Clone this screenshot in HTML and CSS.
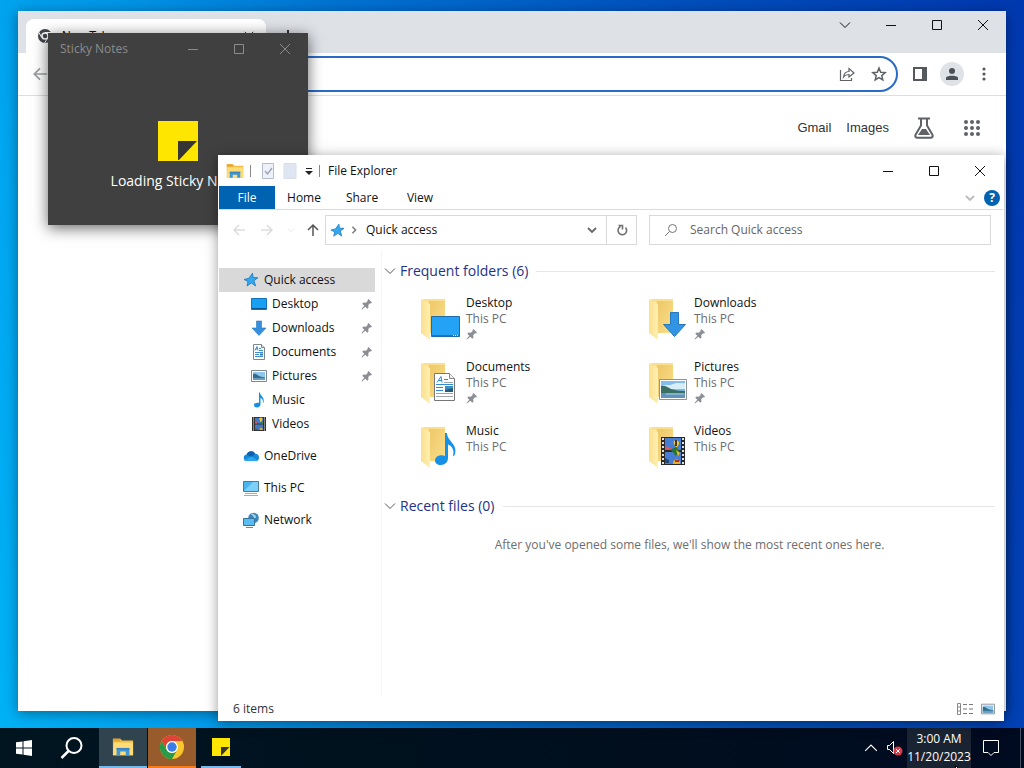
FILE: index.html
```html
<!DOCTYPE html>
<html lang="en">
<head>
    <meta charset="UTF-8">
    <meta name="viewport" content="width=device-width, initial-scale=1.0">
    <title>Desktop</title>
    <link rel="stylesheet" href="styles.css">
</head>
<body>
    <!-- Shared icons -->
    <svg class="sprite" aria-hidden="true">
        <linearGradient id="flap" x1="0" x2="1" y1="0" y2="0"><stop offset="0" stop-color="#fbe08c"/><stop offset="1" stop-color="#ffefb4"/></linearGradient>
        <linearGradient id="sheet" x1="0" x2="1" y1="0" y2="1"><stop offset="0" stop-color="#eec768"/><stop offset="1" stop-color="#fbdf8a"/></linearGradient>
        <symbol id="min" viewBox="0 0 12 12"><path d="M1 6.5h10" fill="none" stroke="currentColor"/></symbol>
        <symbol id="max" viewBox="0 0 12 12"><path d="M1.5 1.5h9v9h-9z" fill="none" stroke="currentColor"/></symbol>
        <symbol id="close" viewBox="0 0 12 12"><path d="M1 1l10 10M11 1L1 11" fill="none" stroke="currentColor"/></symbol>
        <symbol id="chevron" viewBox="0 0 12 12"><path d="M1 3.5l5 5 5-5" fill="none" stroke="currentColor"/></symbol>
        <symbol id="chevron-bold" viewBox="0 0 10 10"><path d="M1 3l4 4 4-4" fill="none" stroke="currentColor" stroke-width="1.8"/></symbol>
        <symbol id="arrow" viewBox="0 0 14 14"><path d="M13 7H2M7 2L2 7l5 5" fill="none" stroke="currentColor" stroke-width="1.5"/></symbol>
        <symbol id="pin" viewBox="0 0 12 12"><path d="M7.500 1L11 4.500l-1 1-1-.2-1.800 1.900.3 2.300-1.200 1.200-2-2L1 11.500l-.5-.5 2.800-3.300-2-2 1.200-1.200 2.300.3L6.700 3l-.2-1z" fill="#8b8f94"/></symbol>
        <symbol id="star" viewBox="0 0 16 16"><path d="M9.500 1.200l.6 4.300 4.900.2-4 2.800 1.600 5.500-4.300-3L4 14l1-4.500L1 7.500l4.800-1.200z" fill="#33a8ee" stroke="#1679c4" stroke-width=".8"/></symbol>
        <symbol id="desktop" viewBox="0 0 16 16"><path d="M.5 2.500h15v11H.5z" fill="#18a0f4" stroke="#1173bb"/><path d="M1 12.500h14" stroke="#0b568f"/></symbol>
        <symbol id="down" viewBox="0 0 16 16"><path d="M5.500 1h5v7H15l-7 7.500L1 8h4.500z" fill="#368fdd" stroke="#2578c0" stroke-width=".6"/></symbol>
        <symbol id="document" viewBox="0 0 16 16">
            <path d="M2.500.5h8l3 3v12h-11z" fill="#fff" stroke="#7d8790"/>
            <path d="M10.500.5v3h3" fill="#e6eaee" stroke="#7d8790"/>
            <path d="M4 6.500l2-4 1 4M4.500 5h2M8 4.500h2M8 6.500h4M4 8.500h8M4 10.500h4M4 12.500h8" fill="none" stroke="#3f8fc4"/>
            <path d="M9 9.500h3v2H9z" fill="#2f77ad"/>
        </symbol>
        <symbol id="picture" viewBox="0 0 16 16">
            <path d="M.5 2.500h15v11H.5z" fill="#fff" stroke="#7d8790"/>
            <path d="M2 4h12v8H2z" fill="#8fc6ef"/><path d="M2 6c3-1 4 1 6 2s4 1 6 1.500V12H2z" fill="#326f87"/><path d="M2 10h12v2H2z" fill="#699cc4"/>
        </symbol>
        <symbol id="music" viewBox="0 0 16 16"><path d="M8 .5h1c0 3.500 5 4.500 3.500 10-.3.700-.6.800-.6 0 .3-3-1.200-4-2.400-4.500V12c0 2-1.500 3.500-3.500 3.500S3 14.300 3 13c0-1.600 2-2.800 5-2.200z" fill="#1491e6"/></symbol>
        <symbol id="video" viewBox="0 0 16 16">
            <path d="M1 1h14v14H1z" fill="#34302f"/><path d="M4 2h8v5.500H4zM4 8.500h8V14H4z" fill="#4179c9"/>
            <path d="M2.500 1.500V15M13.500 1.500V15" stroke="#ddd" stroke-dasharray="1 1"/>
            <path d="M8.500 3.500a1.500 1.500 0 1 1 2.800 0L10.300 6h-1z" fill="#f0c52e"/><path d="M4 5l3 1-1 1.500H4z" fill="#d8504b"/><path d="M9 7l3-2v2.500H9z" fill="#3b8236"/><path d="M8.500 14c.3-3 3-3 3.500 0z" fill="#e5ac21"/><path d="M4 12l3 1v1H4z" fill="#34793e"/>
        </symbol>
        <symbol id="cloud" viewBox="0 0 16 16"><path d="M3.500 6.500a4.800 4.800 0 0 1 8.700-.7A4 4 0 0 1 16 9.800 3.400 3.400 0 0 1 12.500 13H3.500a3.300 3.300 0 0 1 0-6.500z" fill="#1687d9"/><path d="M3.500 6.500a4.800 4.800 0 0 1 8.700-.7L8.500 9z" fill="#0d60ad"/><path d="M1 12l7.500-3.500 6 3.800a4 4 0 0 1-2 .7h-9c-1 0-2-.4-2.500-1z" fill="#28a8ea"/></symbol>
        <symbol id="pc" viewBox="0 0 16 16"><path d="M.5 1.500h15v10H.5z" fill="#49b5ef" stroke="#4a7b99"/><path d="M1 11l9-9h5v9z" fill="#7dd0f8"/><path d="M2 13.500h12M1 15.500h14" stroke="#a0adb5"/></symbol>
        <symbol id="network" viewBox="0 0 16 16"><circle cx="10.500" cy="6" r="5.300" fill="#3b87bd"/><path d="M9 1.500c3 1 4 2 4 4l-2 1c0-2-1-3-3-4z" fill="#a5d2e8"/><path d="M.5 6.500h11v7H.5z" fill="#5abcf0" stroke="#34749d"/><path d="M3 15.500h7" stroke="#6c8797"/></symbol>
        <symbol id="folder" viewBox="0 0 40 44">
            <path d="M3 2h22v34H6z" fill="#fae08d"/><path d="M9 4h16v32H9z" fill="url(#sheet)"/><path d="M1 2l9 5v36l-9-7z" fill="url(#flap)"/>
        </symbol>
        <symbol id="explorer" viewBox="0 0 24 20">
            <path d="M1 1h8l2 2h12v16H1z" fill="#f2be42"/><path d="M2 5h21v14H1z" fill="#ffdc77"/><path d="M1 1h8v3H1z" fill="#e6a42b"/><path d="M5 19v-8h14v8h-4v-4H9v4z" fill="#4296d5"/><path d="M5 11h14v2H5z" fill="#3784c2"/>
        </symbol>
        <symbol id="note" viewBox="0 0 40 40"><path d="M0 0h40v40H0z" fill="#ffe600"/><path class="fold" d="M20 20h19L21 39h-1z"/></symbol>
    </svg>

    <main class="desktop">
        <!-- Browser -->
        <section class="window browser">
            <header class="tabstrip">
                <div class="tab">
                    <svg width="14" height="14" viewBox="0 0 14 14"><circle cx="7" cy="7" r="7" fill="#43474b"/><circle cx="7" cy="7" r="3" fill="#43474b" stroke="#fff" stroke-width="1.500"/><path d="M7 3.500h6.500M3.700 8.500L1 3.500M9.800 9L6.500 14" stroke="#fff"/></svg>
                    <span>New Tab</span>
                    <svg class="tab-close" width="10" height="10"><use href="#close"/></svg>
                </div>
                <button class="new-tab" aria-label="New tab"><svg width="12" height="12" viewBox="0 0 12 12"><path d="M6 0v12M0 6h12" stroke="#333" stroke-width="2"/></svg></button>
                <div class="controls">
                    <button aria-label="Search tabs"><svg><use href="#chevron"/></svg></button>
                    <button aria-label="Minimize"><svg><use href="#min"/></svg></button>
                    <button aria-label="Maximize"><svg><use href="#max"/></svg></button>
                    <button aria-label="Close"><svg><use href="#close"/></svg></button>
                </div>
            </header>
            <div class="toolbar">
                <button class="back" aria-label="Back"><svg width="16" height="16"><use href="#arrow"/></svg></button>
                <div class="omnibox">
                    <input type="text" aria-label="Address">
                    <button aria-label="Share"><svg width="16" height="16" viewBox="0 0 16 16"><path d="M1.500 4v10.500h11V12M4.500 11c.5-4 2.500-5.500 5.500-5.500V2.500L15 7l-5 4V8.500C7.500 8.500 6 9 4.500 11z" fill="none" stroke="#5f6368" stroke-width="1.200"/></svg></button>
                    <button aria-label="Bookmark"><svg width="16" height="16" viewBox="0 0 16 16"><path d="M8 2l1.700 4.200 4.500.4-3.400 3 1 4.400L8 11.600l-3.800 2.400 1-4.400-3.400-3 4.500-.4z" fill="none" stroke="#5f6368" stroke-width="1.500"/></svg></button>
                </div>
                <button class="tool" aria-label="Side panel"><svg width="14" height="14" viewBox="0 0 14 14"><path d="M1 1h12v12H1z" fill="none" stroke="#55595d" stroke-width="2"/><path d="M9 1h4v12H9z" fill="#55595d"/></svg></button>
                <button class="tool avatar" aria-label="Profile"><svg width="12" height="12" viewBox="0 0 12 12"><circle cx="6" cy="3" r="3" fill="#4b5157"/><path d="M0 12V9.500C1.500 7 10.500 7 12 9.500V12z" fill="#4b5157"/></svg></button>
                <button class="tool" aria-label="Menu"><svg width="4" height="14" viewBox="0 0 4 14" fill="#55595d"><circle cx="2" cy="2" r="1.600"/><circle cx="2" cy="7" r="1.600"/><circle cx="2" cy="12" r="1.600"/></svg></button>
            </div>
            <nav class="google-links">
                <a href="#">Gmail</a>
                <a href="#">Images</a>
                <a class="labs" href="#" aria-label="Labs"><svg width="20" height="22" viewBox="0 0 20 22"><path d="M4 1.500h12M7 1.500v7L1.700 17.500c-1 2 0 3.200 1.800 3.200h13c1.800 0 2.800-1.200 1.800-3.200L13 8.500v-7" fill="none" stroke="#5f6368" stroke-width="2"/><path d="M4 18l4-6h4l4 6z" fill="#5f6368"/></svg></a>
                <a class="apps" href="#" aria-label="Apps"><svg width="18" height="18" viewBox="0 0 18 18" fill="#5f6368"><circle cx="3" cy="3" r="2"/><circle cx="9" cy="3" r="2"/><circle cx="15" cy="3" r="2"/><circle cx="3" cy="9" r="2"/><circle cx="9" cy="9" r="2"/><circle cx="15" cy="9" r="2"/><circle cx="3" cy="15" r="2"/><circle cx="9" cy="15" r="2"/><circle cx="15" cy="15" r="2"/></svg></a>
            </nav>
        </section>

        <!-- Sticky Notes splash -->
        <section class="window sticky">
            <header class="titlebar">
                <span>Sticky Notes</span>
                <div class="controls">
                    <button aria-label="Minimize"><svg><use href="#min"/></svg></button>
                    <button aria-label="Maximize"><svg><use href="#max"/></svg></button>
                    <button aria-label="Close"><svg><use href="#close"/></svg></button>
                </div>
            </header>
            <div class="splash">
                <svg width="40" height="40"><use href="#note"/></svg>
                <p>Loading Sticky Notes</p>
            </div>
        </section>

        <!-- File Explorer -->
        <section class="window explorer">
            <header class="titlebar">
                <div class="quick-tools">
                    <svg width="18" height="16"><use href="#explorer"/></svg>
                    <i class="sep"></i>
                    <svg class="props" width="14" height="16" viewBox="0 0 14 16"><path d="M1.500.5h11v15h-11z" fill="#eef2f8" stroke="#b4bdcb"/><path d="M4 8l2.500 3L11 5" fill="none" stroke="#93a2bd" stroke-width="1.300"/></svg>
                    <svg class="blank" width="14" height="16" viewBox="0 0 14 16"><path d="M1 .5h12v15H1z" fill="#dfe5f2" stroke="#d9dfea"/></svg>
                    <svg width="8" height="8" viewBox="0 0 8 8"><path d="M1 1.500h6" stroke="#222"/><path d="M0 4h8L4 8z" fill="#222"/></svg>
                    <i class="sep"></i>
                </div>
                <h1>File Explorer</h1>
                <div class="controls">
                    <button aria-label="Minimize"><svg><use href="#min"/></svg></button>
                    <button aria-label="Maximize"><svg><use href="#max"/></svg></button>
                    <button aria-label="Close"><svg><use href="#close"/></svg></button>
                </div>
            </header>
            <nav class="ribbon">
                <button class="file">File</button>
                <button>Home</button>
                <button>Share</button>
                <button>View</button>
                <svg class="expand" width="10" height="10"><use href="#chevron-bold"/></svg>
                <button class="help" aria-label="Help">?</button>
            </nav>
            <div class="address-row">
                <button class="nav-btn" aria-label="Back"><svg><use href="#arrow"/></svg></button>
                <button class="nav-btn forward" aria-label="Forward"><svg><use href="#arrow"/></svg></button>
                <button class="nav-btn recent" aria-label="Recent locations"><svg><use href="#chevron"/></svg></button>
                <button class="nav-btn up" aria-label="Up"><svg><use href="#arrow"/></svg></button>
                <div class="address">
                    <svg width="15" height="15"><use href="#star"/></svg>
                    <svg class="crumb" width="8" height="8"><use href="#chevron-bold"/></svg>
                    <span>Quick access</span>
                    <button class="history" aria-label="Previous locations"><svg width="10" height="10"><use href="#chevron-bold"/></svg></button>
                    <button class="refresh" aria-label="Refresh"><svg width="12" height="12" viewBox="0 0 12 12"><path d="M9.500 3.500a4.300 4.300 0 1 1-5-1M2.500 1.500h4v4" fill="none" stroke="#707070" stroke-width="1.600"/></svg></button>
                </div>
                <label class="search">
                    <svg width="14" height="14" viewBox="0 0 14 14"><circle cx="8.500" cy="5.500" r="4" fill="none" stroke="#777"/><path d="M5.500 8.500L1 13" stroke="#777"/></svg>
                    <input type="text" placeholder="Search Quick access" aria-label="Search Quick access">
                </label>
            </div>
            <div class="panes">
                <ul class="tree">
                    <li class="root selected"><svg><use href="#star"/></svg>Quick access</li>
                    <li><svg><use href="#desktop"/></svg>Desktop<svg class="pin"><use href="#pin"/></svg></li>
                    <li><svg><use href="#down"/></svg>Downloads<svg class="pin"><use href="#pin"/></svg></li>
                    <li><svg><use href="#document"/></svg>Documents<svg class="pin"><use href="#pin"/></svg></li>
                    <li><svg><use href="#picture"/></svg>Pictures<svg class="pin"><use href="#pin"/></svg></li>
                    <li><svg><use href="#music"/></svg>Music</li>
                    <li><svg><use href="#video"/></svg>Videos</li>
                    <li class="root"><svg><use href="#cloud"/></svg>OneDrive</li>
                    <li class="root"><svg><use href="#pc"/></svg>This PC</li>
                    <li class="root"><svg><use href="#network"/></svg>Network</li>
                </ul>
                <div class="content">
                    <h2><svg><use href="#chevron"/></svg>Frequent folders (6)</h2>
                    <div class="tiles">
                        <div class="tile">
                            <svg width="40" height="44" viewBox="0 0 40 44"><use href="#folder" width="40" height="44"/><path d="M11.500 19.500h28v20h-28z" fill="#24a3f6" stroke="#1b6ca8"/><path d="M12 38.500h27" stroke="#1777bc"/><path d="M33 38.500h5" stroke="#fff" stroke-dasharray="1 1"/></svg>
                            <div><strong>Desktop</strong><span>This PC</span><svg class="pin"><use href="#pin"/></svg></div>
                        </div>
                        <div class="tile">
                            <svg width="40" height="44" viewBox="0 0 40 44"><use href="#folder" width="40" height="44"/><path d="M22.500 15.500h8v12h7L26.500 39.500 15.500 27.500h7z" fill="#3194e5" stroke="#2578bd"/></svg>
                            <div><strong>Downloads</strong><span>This PC</span><svg class="pin"><use href="#pin"/></svg></div>
                        </div>
                        <div class="tile">
                            <svg width="40" height="44" viewBox="0 0 40 44"><use href="#folder" width="40" height="44"/><path d="M14.500 12.500h15l5 5v22h-20z" fill="#fff" stroke="#777"/><path d="M29.500 12.500v5h5" fill="#eee" stroke="#888"/><path d="M17 21.500l4-6 1 6M18 19.500h4M24 18.500h4M16 23.500h17M16 26.500h7M16 29.500h7" fill="none" stroke="#318bd0"/><path d="M16 32.500h17M16 35.500h17M24 21.500h9" stroke="#9fa7ad"/><path d="M25 25h8v6h-8z" fill="#3b8fc5"/><path d="M25 29l8-2v4h-8z" fill="#265a7c"/></svg>
                            <div><strong>Documents</strong><span>This PC</span><svg class="pin"><use href="#pin"/></svg></div>
                        </div>
                        <div class="tile">
                            <svg width="40" height="44" viewBox="0 0 40 44"><use href="#folder" width="40" height="44"/><path d="M11.500 18.500h27v20h-27z" fill="#fff" stroke="#8c9399"/><path d="M13 20h24v17H13z" fill="#82bdee"/><path d="M13 25c4-2 8 0 12-2s8 0 12-1v6H13z" fill="#d7edf8"/><path d="M13 25c4-1 6 1 10 3 4 1 8 2 14 2v2H13z" fill="#3a7064"/><path d="M13 32h24v5H13z" fill="#5f93bd"/><path d="M18 33h18" stroke="#a8cde4"/></svg>
                            <div><strong>Pictures</strong><span>This PC</span><svg class="pin"><use href="#pin"/></svg></div>
                        </div>
                        <div class="tile">
                            <svg width="40" height="44" viewBox="0 0 40 44"><use href="#folder" width="40" height="44"/><path d="M25 8h2c0 8 11 11 8 21-.7 2-2.500 3-2 1.500 2-6-2-10-5-11V33c0 4-3 7-7 7s-6-2-6-4.500c0-4 5-6.500 10-4.500z" fill="#1592e8"/></svg>
                            <div><strong>Music</strong><span>This PC</span></div>
                        </div>
                        <div class="tile">
                            <svg width="40" height="44" viewBox="0 0 40 44"><use href="#folder" width="40" height="44"/><path d="M13 12h24v28H13z" fill="#292929"/><path d="M17 13h16v12H17zM17 27h16v12H17z" fill="#477dd3"/><path d="M15 13v27M35 13v27" stroke="#e0e0e0" stroke-width="2" stroke-dasharray="2 2"/><path d="M26 19c-2-5 6-5 5 0l-2 3h-1z" fill="#f1cc2a"/><path d="M28 15v6" stroke="#4a3520" stroke-width="2"/><path d="M17 21l6 2v2h-6z" fill="#d65c5c"/><path d="M22 25l6-3 4 5-5 4-1-3z" fill="#287330"/><path d="M28 25l4 3-2 3z" fill="#eebb25"/><path d="M25 39c-1-6 8-6 7 0z" fill="#e9b224"/><path d="M27 36h4" stroke="#b33428" stroke-width="2"/><path d="M17 33l4 2v3h-4z" fill="#244b75"/></svg>
                            <div><strong>Videos</strong><span>This PC</span></div>
                        </div>
                    </div>
                    <h2><svg><use href="#chevron"/></svg>Recent files (0)</h2>
                    <p class="empty">After you've opened some files, we'll show the most recent ones here.</p>
                </div>
            </div>
            <footer class="status">
                <span>6 items</span>
                <button aria-label="Details view"><svg width="16" height="12" viewBox="0 0 16 12"><path d="M.5.5h3v11h-3zM.5 4h3M.5 8h3" fill="none" stroke="#888"/><path d="M6 1.500h4M12 1.500h4M6 6h4M12 6h4M6 10.500h4M12 10.500h4" stroke="#777"/></svg></button>
                <button aria-label="Large icons view"><svg width="14" height="14"><use href="#picture"/></svg></button>
            </footer>
        </section>
    </main>

    <!-- Taskbar -->
    <footer class="taskbar">
        <button aria-label="Start"><svg width="16" height="16" viewBox="0 0 16 16"><path d="M0 2.300l6.500-.9v6.100H0zM7.500 1.200L16 0v7.500H7.500zM0 8.500h6.500v6.100L0 13.700zM7.500 8.500H16V16l-8.500-1.200z" fill="#fff"/></svg></button>
        <button aria-label="Search"><svg width="24" height="24" viewBox="0 0 24 24"><circle cx="14" cy="9.500" r="7.500" fill="none" stroke="#fff" stroke-width="2"/><path d="M8.500 15L1.500 22" stroke="#fff" stroke-width="2.500"/></svg></button>
        <button class="app app-explorer" aria-label="File Explorer"><svg width="22" height="20"><use href="#explorer"/></svg></button>
        <button class="app app-chrome" aria-label="Chrome"><svg width="24" height="24" viewBox="0 0 24 24"><circle cx="12" cy="12" r="12" fill="#f9c62d"/><path d="M1.600 6A12 12 0 0 1 22.400 6H12a6 6 0 0 0-5.200 9z" fill="#df4437"/><path d="M1.600 6A12 12 0 0 0 12 24l5.200-9A6 6 0 0 1 6.800 15z" fill="#279b4a"/><circle cx="12" cy="12" r="6" fill="#fff"/><circle cx="12" cy="12" r="4.700" fill="#3c7de8"/></svg></button>
        <button class="app app-notes" aria-label="Sticky Notes"><svg width="18" height="18"><use href="#note"/></svg></button>
        <div class="tray">
            <button class="overflow" aria-label="Show hidden icons"><svg width="14" height="14"><use href="#chevron"/></svg></button>
            <button class="sound" aria-label="Sound"><svg width="18" height="16" viewBox="0 0 18 16"><path d="M1.500 5.500h2l4-4v12l-4-4h-2z" fill="none" stroke="#fff"/><circle cx="12" cy="11" r="4.500" fill="#d43b48"/><path d="M10 9l4 4M14 9l-4 4" stroke="#fff"/></svg></button>
            <div class="clock"><time>3:00 AM</time><time>11/20/2023</time></div>
            <button class="action" aria-label="Notifications"><svg width="18" height="16" viewBox="0 0 18 16"><path d="M1.500.5h15v12H12l-3 3-3-3H1.500z" fill="none" stroke="#fff"/></svg></button>
            <button class="peek" aria-label="Show desktop"></button>
        </div>
    </footer>
    <svg class="cursor" width="12" height="18" viewBox="0 0 12 18"><path d="M.5.500v14l3.500-3 2.500 5 2-1-2.500-5h5z" fill="#fff" stroke="#000"/></svg>
</body>
</html>
```
FILE: styles.css
```css
* { box-sizing: border-box; margin: 0; padding: 0; }
body {
    display: flex; flex-direction: column; height: 100vh; overflow: hidden;
    font-family: "Open Sans", "Noto Sans", sans-serif; font-size: 12px; line-height: 16px; color: #111;
    background: linear-gradient(80deg, #00b2f6 0%, #0096e8 22%, #0074d4 40%, #0050be 70%, #0038b0 100%);
}
button { display: flex; align-items: center; justify-content: center; flex: none; background: none; border: none; font: inherit; color: inherit; }
input { border: none; outline: none; background: none; font: inherit; min-width: 0; }
a { color: inherit; text-decoration: none; }
svg { display: block; flex: none; }
.sprite { position: absolute; width: 0; height: 0; }

/* Windows */
.desktop { position: relative; flex: 1; min-height: 0; }
.window { position: absolute; display: flex; flex-direction: column; background: #fff; box-shadow: 0 2px 12px rgba(0, 0, 0, 0.4); }
.controls { display: flex; margin-left: auto; }
.controls button { width: 46px; height: 28px; }
.controls svg { width: 12px; height: 12px; }
.titlebar { display: flex; align-items: center; }

/* Browser */
.browser { top: 11px; left: 18px; right: 18px; bottom: 17px; font-family: "Liberation Sans", Arial, sans-serif; }
.tabstrip { display: flex; align-items: flex-end; height: 42px; padding-left: 8px; background: #dee1e6; }
.tabstrip .controls { align-self: flex-start; }
.tab { display: flex; align-items: center; gap: 10px; width: 240px; height: 34px; padding: 0 12px; background: #fff; border-radius: 8px 8px 0 0; }
.tab-close { margin-left: auto; }
.new-tab { width: 28px; height: 34px; margin-left: 8px; }
.toolbar { display: flex; align-items: center; height: 43px; padding: 0 8px 0 12px; border-bottom: 1px solid #dcdee1; }
.back { width: 20px; color: #9a9da1; }
.omnibox { display: flex; align-items: center; flex: 1; gap: 16px; height: 36px; margin: 0 8px 0 90px; padding: 0 9px; border: 2px solid #2a6bc8; border-radius: 18px; }
.omnibox input { flex: 1; }
.tool { width: 28px; height: 24px; }
.avatar { width: 24px; height: 24px; margin: 0 6px; background: #dfe2e6; border-radius: 50%; }
.google-links { display: flex; align-items: center; gap: 15px; justify-content: flex-end; height: 64px; padding-right: 25px; font-size: 13px; color: #333; }
.labs { margin-left: 10px; }
.apps { margin-left: 14px; }

/* Sticky Notes */
.sticky { top: 33px; left: 48px; width: 260px; height: 192px; background: #404040; color: #fff; box-shadow: 0 3px 14px rgba(0, 0, 0, 0.6); }
.sticky .titlebar { height: 32px; padding-left: 12px; color: #8c8c8c; }
.splash { display: flex; flex-direction: column; align-items: center; gap: 10px; padding-top: 56px; font-size: 14px; line-height: 20px; }
.fold { fill: #353535; }

/* File Explorer */
.explorer { top: 155px; left: 218px; right: 20px; bottom: 7px; padding: 0 1px; }
.explorer .titlebar { height: 31px; }
.quick-tools { display: flex; align-items: center; gap: 6px; padding: 0 8px 0 7px; }
.sep { width: 1px; height: 12px; background: #888; }
.props { margin-left: 4px; }
.blank { margin: 0 2px 0 2px; }
h1 { font-size: 12px; line-height: 16px; font-weight: 400; }
.ribbon { display: flex; align-items: center; height: 24px; padding-right: 3px; border-bottom: 1px solid #dadbdc; }
.ribbon button { width: 58px; height: 23px; }
.ribbon .file { width: 56px; color: #fff; background: #0063b1; }
.ribbon .expand { margin: 0 9px 0 auto; color: #bbb; }
.ribbon .help { width: 16px; height: 16px; border-radius: 50%; background: #0063b1; color: #fff; font-weight: 700; }
.address-row { display: flex; align-items: center; height: 40px; padding: 0 12px 0 6px; }
.nav-btn { width: 28px; height: 28px; color: #ddd; }
.nav-btn svg { width: 14px; height: 14px; }
.forward svg { transform: rotate(180deg); }
.nav-btn.recent { width: 20px; }
.recent svg { width: 8px; height: 8px; }
.nav-btn.up { width: 24px; color: #555; }
.up svg { transform: rotate(90deg); }
.address { display: flex; align-items: center; flex: 306; height: 30px; padding-left: 4px; border: 1px solid #d9d9d9; }
.crumb { margin: 0 8px 0 5px; color: #777; transform: rotate(-90deg); }
.history { width: 28px; height: 28px; margin-left: auto; color: #666; }
.refresh { width: 30px; height: 28px; border-left: 1px solid #d9d9d9; }
.search { display: flex; align-items: center; flex: 312; gap: 12px; height: 30px; margin-left: 12px; padding: 0 14px; border: 1px solid #d9d9d9; }
.search input { flex: 1; }
.search input::placeholder { color: #666; opacity: 1; }

/* Navigation pane */
.panes { display: flex; flex: 1; min-height: 0; }
.tree { width: 163px; padding: 18px 6px 0 0; border-right: 1px solid #f5f5f5; list-style: none; }
.tree li { display: flex; align-items: center; gap: 5px; height: 24px; padding-left: 32px; }
.tree li.root { padding-left: 24px; }
.tree li + .root { margin-top: 8px; }
.tree svg { width: 16px; height: 16px; }
.tree .selected { background: #d9d9d9; }
.tree .pin { width: 12px; height: 12px; margin: 0 2px 0 auto; }

/* Folder list */
.content { flex: 1; padding: 11px 8px 0 2px; }
h2 { display: flex; align-items: center; gap: 4px; font-size: 14px; line-height: 20px; font-weight: 400; color: #1e3287; }
h2 svg { width: 12px; height: 12px; color: #555; }
h2::after { content: ""; flex: 1; height: 1px; margin-left: 4px; background: #e4e7ec; }
.tiles { display: grid; grid-template-columns: 228px 228px; padding: 12px 0 11px 36px; }
.tile { display: flex; gap: 6px; height: 64px; }
.tile > svg { margin-top: 4px; }
.tile > div { display: flex; flex-direction: column; padding-top: 2px; }
.tile strong { font-weight: 400; }
.tile span { color: #6d6d6d; }
.tile .pin { width: 12px; height: 12px; margin-top: 1px; }
.empty { padding-top: 21px; text-align: center; color: #6d6d6d; }
.status { display: flex; align-items: center; gap: 8px; height: 25px; padding: 0 8px 0 14px; color: #333; }
.status span { margin-right: auto; }

/* Taskbar */
.taskbar { display: flex; height: 40px; background: linear-gradient(90deg, #001520, #00101e 50%, #000a20); color: #fff; }
.taskbar > button { width: 48px; }
.taskbar > .app { margin-left: 1px; border-bottom: 2px solid #76b9ed; }
.taskbar > .app-explorer { margin-left: 3px; background: #304450; }
.taskbar > .app-chrome { background: #985c2c; border-color: #f77a1c; }
.taskbar > .app-notes { width: 40px; margin-left: 5px; }
.app-notes .fold { fill: #111; }
.tray { display: flex; margin-left: auto; }
.overflow { width: 24px; }
.overflow svg { transform: rotate(180deg); }
.sound { width: 24px; }
.clock { display: flex; flex-direction: column; justify-content: center; width: 64px; line-height: 18px; text-align: center; background: #192332; white-space: nowrap; }
.action { width: 40px; }
.peek { width: 4px; margin-left: 9px; border-left: 1px solid #465263; }
.cursor { position: absolute; top: 765px; left: 955px; }
```
